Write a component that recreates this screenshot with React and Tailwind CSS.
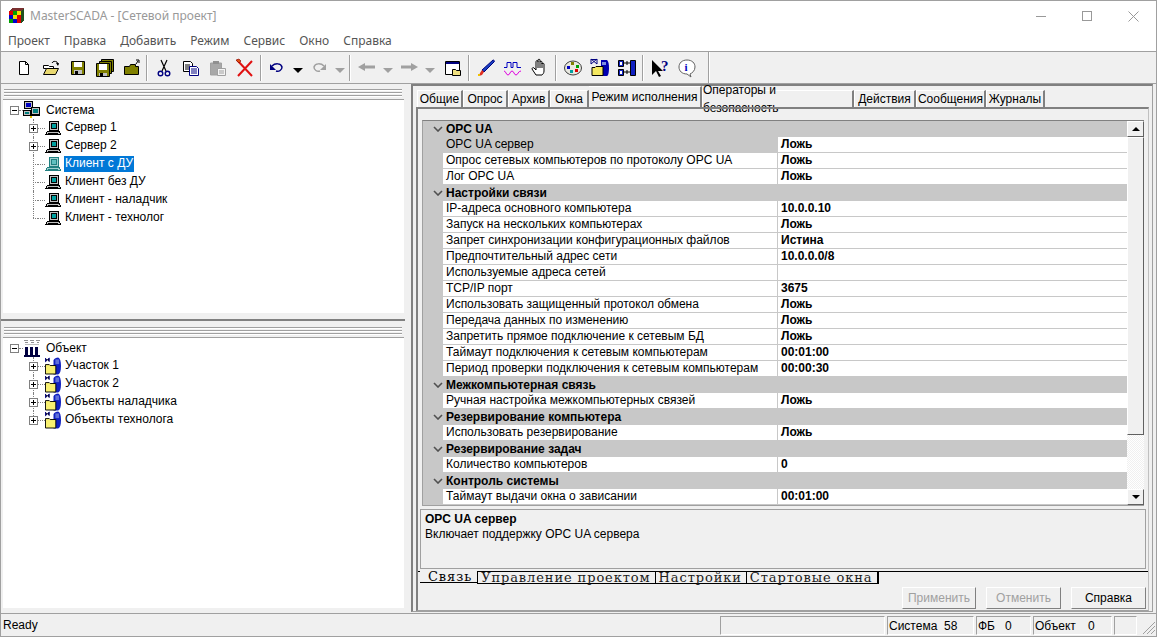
import React from "react";

const menu = ["Проект", "Правка", "Добавить", "Режим", "Сервис", "Окно", "Справка"];

const tabs = [
  ["Общие", "w-[46px]"],
  ["Опрос", "w-[45px]"],
  ["Архив", "w-[42px]"],
  ["Окна", "w-[39px]"],
  ["Режим исполнения", "w-[113px]", true],
  ["Операторы и безопасность", "w-[152px]"],
  ["Действия", "w-[62px]"],
  ["Сообщения", "w-[70px]"],
  ["Журналы", "w-[59px]"],
];

const rows = [
  { group: "OPC UA" },
  { name: "OPC UA сервер", value: "Ложь", selected: true },
  { name: "Опрос сетевых компьютеров по протоколу OPC UA", value: "Ложь" },
  { name: "Лог OPC UA", value: "Ложь" },
  { group: "Настройки связи" },
  { name: "IP-адреса основного компьютера", value: "10.0.0.10" },
  { name: "Запуск на нескольких компьютерах", value: "Ложь" },
  { name: "Запрет синхронизации конфигурационных файлов", value: "Истина" },
  { name: "Предпочтительный адрес сети", value: "10.0.0.0/8" },
  { name: "Используемые адреса сетей", value: "" },
  { name: "TCP/IP порт", value: "3675" },
  { name: "Использовать защищенный протокол обмена", value: "Ложь" },
  { name: "Передача данных по изменению", value: "Ложь" },
  { name: "Запретить прямое подключение к сетевым БД", value: "Ложь" },
  { name: "Таймаут подключения к сетевым компьютерам", value: "00:01:00" },
  { name: "Период проверки подключения к сетевым компьютерам", value: "00:00:30" },
  { group: "Межкомпьютерная связь" },
  { name: "Ручная настройка межкомпьютерных связей", value: "Ложь" },
  { group: "Резервирование компьютера" },
  { name: "Использовать резервирование", value: "Ложь" },
  { group: "Резервирование задач" },
  { name: "Количество компьютеров", value: "0" },
  { group: "Контроль системы" },
  { name: "Таймаут выдачи окна о зависании", value: "00:01:00" },
];

function Svg({ size = 20, children }) {
  return (
    <svg width={size} height={size} viewBox="0 0 20 20" fill="none">
      {children}
    </svg>
  );
}

function Logo() {
  const colors = ["#e00000", "#00a000", "#f0e000", "#0000d0", "#f0e000", "#e00000", "#00a000", "#0000d0", "#e00000"];
  return (
    <svg width="16" height="16" viewBox="0 0 16 16" shapeRendering="crispEdges">
      {colors.map((c, i) => (
        <rect key={i} x={(i % 3) * 4} y={3 + Math.floor(i / 3) * 4} width="4" height="4" fill={c} />
      ))}
      <path d="M0 3l3-3h12v3h-3z" fill="#7a3030" />
      <path d="M12 3l3-3v12l-3 3z" fill="#205020" />
    </svg>
  );
}

const ic = {
  file: (
    <Svg>
      <path d="M5.5 3.5h6l3 3v10h-9z" fill="#fff" stroke="#000" />
      <path d="M11.5 3.5v3h3" stroke="#000" />
    </Svg>
  ),
  open: (
    <Svg>
      <path d="M2.5 7.5h5l1 1h4v2h-10z" fill="#fff" stroke="#000" />
      <path d="M2.5 16.5l3-6h12l-3 6z" fill="#e8d870" stroke="#000" />
      <path d="M11 5c1-2 3-2 5-1l1 3" stroke="#000" />
      <path d="M15 5h3l-1 3z" fill="#000" />
    </Svg>
  ),
  save: (
    <Svg>
      <path d="M3.5 3.5h13v13h-13z" fill="#808000" stroke="#000" />
      <path d="M6 4h8v5H6z" fill="#fff" />
      <path d="M6 12h8v4H6z" fill="#c0c0c0" />
      <path d="M7 13h3v3H7z" fill="#000" />
    </Svg>
  ),
  saveAll: (
    <Svg>
      <path d="M6.5 1.5h12v12h-12z" fill="#808000" stroke="#000" />
      <path d="M4.5 3.5h12v12h-12z" fill="#808000" stroke="#000" />
      <path d="M1.5 5.5h13v13h-13z" fill="#808000" stroke="#000" />
      <path d="M4 6h8v6H4z" fill="#fff" />
      <path d="M4 15h8v3H4z" fill="#c0c0c0" />
      <path d="M5 15h3v3H5z" fill="#000" />
    </Svg>
  ),
  folderUp: (
    <Svg>
      <path d="M2.5 8.5h5l1-2h5v2h3v8h-14z" fill="#808000" stroke="#000" />
      <path d="M14 6l2-3M14 2h3v3" stroke="#000" />
    </Svg>
  ),
  cut: (
    <Svg>
      <path d="M7 2l5 11M13 2l-5 11" stroke="#000" strokeWidth="1.2" />
      <circle cx="6.5" cy="15.5" r="2.3" stroke="#000080" strokeWidth="1.4" />
      <circle cx="13.5" cy="15.5" r="2.3" stroke="#000080" strokeWidth="1.4" />
    </Svg>
  ),
  copy: (
    <Svg>
      <path d="M2.5 3.5h7l2 2v8h-9z" fill="#fff" stroke="#000" />
      <path d="M4 7h5M4 9h5M4 11h5" stroke="#000" />
      <path d="M8.5 8.5h7l2 2v7h-9z" fill="#fff" stroke="#000080" />
      <path d="M10 11h6M10 13h6M10 15h6" stroke="#000080" />
    </Svg>
  ),
  paste: (
    <Svg>
      <path d="M2.5 5h11v12h-11z" fill="#a8a8a8" stroke="#a0a0a0" />
      <path d="M5 3h6v3H5z" fill="#909090" />
      <path d="M9.5 10.5h8v7h-8z" fill="#f4f4f4" stroke="#a0a0a0" />
      <path d="M11 13h5M11 15h5" stroke="#a0a0a0" />
    </Svg>
  ),
  del: (
    <Svg>
      <path d="M2 2l15 16M17 3L3 18" stroke="#e01010" strokeWidth="2" />
      <path d="M1 2l3-1 2 2-2 2z" fill="#e05010" stroke="#800000" strokeWidth=".6" />
    </Svg>
  ),
  undo: (
    <Svg>
      <path d="M5 8c3-3 9-3 10 1 0 3-3 5-6 4" stroke="#000080" strokeWidth="1.5" />
      <path d="M3 6v6h6z" fill="#000080" />
    </Svg>
  ),
  redo: (
    <Svg>
      <path d="M15 8c-3-3-9-3-10 1 0 3 3 5 6 4" stroke="#a0a0a0" strokeWidth="1.5" />
      <path d="M17 6v6h-6z" fill="#a0a0a0" />
    </Svg>
  ),
  back: (
    <Svg>
      <path d="M1 9l7-4v2.5h10v3H8V13z" fill="#a0a0a0" />
    </Svg>
  ),
  forward: (
    <Svg>
      <path d="M19 9l-7-4v2.5H2v3h10V13z" fill="#a0a0a0" />
    </Svg>
  ),
  window: (
    <Svg>
      <path d="M2.5 3.5h14v13h-14z" fill="#fff" stroke="#000" />
      <path d="M3 4h13v2H3z" fill="#000080" />
      <path d="M9.5 11.5h3l1 1h4v5h-8z" fill="#f0e080" stroke="#000" />
    </Svg>
  ),
  brush: (
    <Svg>
      <path d="M17 2c1 0 2 1 1 2L8 14l-2-2z" fill="#1840c0" stroke="#000080" />
      <path d="M6 12l2 2-2 3-3 1 1-3z" fill="#e03020" />
      <path d="M2 16h2v2H2z" fill="#f0c000" />
    </Svg>
  ),
  wave: (
    <Svg>
      <path d="M1 9.5h3v-5h4v5h2v-5h4v5h4" stroke="#0000c0" />
      <path d="M1 13c2 0 2 4 4 4s2-4 4-4 2 4 4 4 2-4 5-4" stroke="#e000e0" />
    </Svg>
  ),
  hand: (
    <Svg>
      <path d="M6 17l-4-6c0-1 1-2 2-1l2 2V4c0-2 2-2 2 0V2c0-1 2-1 2 0v2c0-1 2-1 2 0v2c0-1 2-1 2 0v7c0 2-1 3-2 4z" fill="#fff" stroke="#000" />
      <path d="M8 4v6M10 4v6M12 5v5" stroke="#000" />
    </Svg>
  ),
  palette: (
    <Svg>
      <ellipse cx="10" cy="10" rx="8.5" ry="7" fill="#e8e8e0" stroke="#404040" />
      <path d="M8 4h3v3H8z" fill="#808000" />
      <path d="M4 8h3v3H4z" fill="#0000c0" />
      <path d="M13 7h3v3h-3z" fill="#00a000" />
      <path d="M12 11h3v3h-3z" fill="#e00000" />
      <path d="M7 12h3v3H7z" fill="#00a0a0" />
    </Svg>
  ),
  module: (
    <Svg>
      <path d="M11 2h6c1 1 2 3 2 8s-1 8-2 8h-6z" fill="#0000b0" />
      <path d="M2 9.5h3l1-1h7v9H2z" fill="#f4e860" stroke="#000" />
      <path d="M1 1.5h6M1 1v5l6-5v5z" stroke="#000080" />
      <path d="M12 4h4v3h-4z" fill="#8090e0" />
    </Svg>
  ),
  link: (
    <Svg>
      <path d="M1.5 2.5h5v6h-5zM1.5 11.5h5v6h-5z" fill="#1020c0" stroke="#000" />
      <path d="M3 4h2v3H3zM3 13h2v3H3z" fill="#fff" />
      <path d="M13.5 2.5h5v15h-5z" fill="#1020c0" stroke="#000" />
      <path d="M7 5h6M7 14h6M10 3v4M10 12v4" stroke="#000" />
    </Svg>
  ),
  help: (
    <Svg>
      <path d="M2 2v15l4-4 3 6 2-1-3-5h5z" fill="#000" />
      <text x="11" y="13" fontSize="15" fontWeight="700" fontFamily="Liberation Serif" fill="#000080">?</text>
    </Svg>
  ),
  info: (
    <Svg>
      <path d="M10 2c5 0 8 3 8 7s-3 6-5 7l1 3-4-3c-5 0-8-3-8-7s3-7 8-7z" fill="#fff" stroke="#606060" />
      <text x="7.5" y="13" fontSize="11" fontWeight="700" fontFamily="Liberation Serif" fill="#0000c0">i</text>
    </Svg>
  ),
};

function Drop({ dark }) {
  return (
    <span className={`w-0 h-0 border-x-[5px] border-x-transparent border-t-[5px] mt-[5px] ${dark ? "border-t-black" : "border-t-[#a0a0a0]"}`} />
  );
}

function Sep({ className = "" }) {
  return <div className={`w-[2px] h-[26px] bg-[#a0a0a0] border-r border-white ${className}`} />;
}

function Btn({ icon, w = "w-[27px]" }) {
  return <div className={`${w} flex items-center justify-center shrink-0`}>{icon}</div>;
}

function Toolbar() {
  return (
    <div className="h-[32px] flex items-center pl-[9px] bg-[#f0f0f0] border-t border-[#a0a0a0] border-b-0 shrink-0">
      <Btn icon={ic.file} />
      <Btn icon={ic.open} />
      <Btn icon={ic.save} />
      <Btn icon={ic.saveAll} />
      <Btn icon={ic.folderUp} />
      <Sep className="ml-px mr-[2px]" />
      <Btn icon={ic.cut} />
      <Btn icon={ic.copy} />
      <Btn icon={ic.paste} />
      <Btn icon={ic.del} />
      <Sep className="ml-[2px] mr-[3px]" />
      <Btn icon={ic.undo} w="w-[24px]" />
      <Btn icon={<Drop dark />} w="w-[18px]" />
      <Btn icon={ic.redo} w="w-[24px]" />
      <Btn icon={<Drop />} w="w-[18px]" />
      <Sep className="ml-0 mr-[4px]" />
      <Btn icon={ic.back} w="w-[24px]" />
      <Btn icon={<Drop />} w="w-[18px]" />
      <Btn icon={ic.forward} w="w-[24px]" />
      <Btn icon={<Drop />} w="w-[18px]" />
      <Btn icon={ic.window} />
      <Sep className="mx-[2px]" />
      <Btn icon={ic.brush} />
      <Btn icon={ic.wave} />
      <Btn icon={ic.hand} />
      <Sep className="mx-[2px]" />
      <Btn icon={ic.palette} />
      <Btn icon={ic.module} />
      <Btn icon={ic.link} />
      <Sep className="mx-[2px]" />
      <Btn icon={ic.help} />
      <Btn icon={ic.info} />
      <div className="w-[2px] h-[32px] bg-[#a0a0a0] border-r border-white ml-[8px]" />
    </div>
  );
}

function Gripper() {
  return (
    <div className="h-[12px] shrink-0 flex flex-col justify-center gap-px px-[3px] bg-[#f0f0f0]">
      <div className="h-[2px] bg-white border-t border-[#a0a0a0]" />
      <div className="h-[2px] bg-white border-t border-[#a0a0a0]" />
      <div className="h-[2px] bg-white border-t border-[#a0a0a0]" />
    </div>
  );
}

function PcIcon({ faded }) {
  const line = faded ? "#208080" : "#000";
  return (
    <svg width="16" height="16" viewBox="0 0 16 16" shapeRendering="crispEdges">
      <path d="M4.5 1.5h9v9h-9z" fill={faded ? "#a0d0d0" : "#c0c0c0"} stroke={line} />
      <path d="M6 3h6v6H6z" fill={faded ? "#208080" : "#000"} />
      <path d="M7 4h4v4H7z" fill={faded ? "#60c0c0" : "#00a0a0"} />
      <path d="M2.5 11.5h12l1 3H.5z" fill={faded ? "#a0d0d0" : "#c0c0c0"} stroke={line} />
      <path d="M3 13h10" stroke={line} />
    </svg>
  );
}

function NetIcon() {
  return (
    <svg width="18" height="18" viewBox="0 0 18 18" shapeRendering="crispEdges">
      <path d="M1.5 .5h8v7h-8z" fill="#c0c0c0" stroke="#000" />
      <path d="M3 2h5v4H3z" fill="#0000c0" />
      <path d="M8.5 6.5h8v7h-8z" fill="#c0c0c0" stroke="#000" />
      <path d="M10 8h5v4h-5z" fill="#008080" />
      <path d="M.5 9.5h7v5h-7z" fill="#c0c0c0" stroke="#000" />
      <path d="M2 11h4v2H2z" fill="#008080" />
      <path d="M8 14.5h9" stroke="#000" />
      <path d="M7 15h2v2H7z" fill="#e0c000" />
    </svg>
  );
}

function ObjIcon() {
  return (
    <svg width="18" height="18" viewBox="0 0 18 18" shapeRendering="crispEdges">
      <path d="M1 1h4v1H1zM7 1h4v1H7zM13 1h4v1h-4zM2 3h3v1H2zM8 3h3v1H8zM14 3h2v1h-2z" fill="#909090" />
      <path d="M2 5h14v1H2z" fill="#c0c0c0" />
      <path d="M2 8h3v10H2zM7 8h3v10H7zM12 8h3v10h-3zM1 16h16v2H1z" fill="#000040" />
    </svg>
  );
}

function GroupIcon() {
  return (
    <svg width="17" height="18" viewBox="0 0 17 18">
      <path d="M9 3c1-2 3-3 5-3 2 1 3 4 3 9s-1 8-3 9H9z" fill="#1020c0" />
      <path d="M11 2h4v5h-4z" fill="#6070d8" />
      <path d="M.5 7.5h4l1 1h6v9H.5z" fill="#f8f070" stroke="#000" />
      <path d="M.5 .5v4l4-4v4" stroke="#000080" />
    </svg>
  );
}

function Expander({ open }) {
  return (
    <span className="relative w-[9px] h-[9px] border border-[#808080] bg-white shrink-0 block">
      <span className="absolute left-[1px] top-[3px] w-[5px] h-px bg-black" />
      {!open && <span className="absolute left-[3px] top-[1px] w-px h-[5px] bg-black" />}
    </span>
  );
}

function TreeRoot({ icon, label }) {
  return (
    <div className="relative flex items-center h-[18px] pl-[7px]">
      <Expander open />
      <span className="w-[4px] border-t border-dotted border-[#808080]" />
      <span className="w-[18px] flex justify-center">{icon}</span>
      <span className="ml-[5px]">{label}</span>
    </div>
  );
}

function TreeChild({ icon, label, expandable, selected, last }) {
  return (
    <div className="relative flex items-center h-[18px] pl-[26px]">
      {/* линия дерева */}
      <span className={`absolute left-[30px] top-0 border-l border-dotted border-[#808080] ${last ? "h-[9px]" : "h-[18px]"}`} />
      {expandable ? (
        <span className="relative"><Expander /></span>
      ) : (
        <span className="w-[9px] h-[9px] relative block shrink-0">
          <span className="absolute left-[4px] right-0 top-[4px] border-t border-dotted border-[#808080]" />
        </span>
      )}
      <span className="w-[7px] border-t border-dotted border-[#808080]" />
      <span className="w-[16px] flex justify-center shrink-0">{icon}</span>
      <span className={`ml-[3px] px-[1px] h-[16px] leading-[15px] ${selected ? "bg-[#0078d7] text-white" : ""}`}>{label}</span>
    </div>
  );
}

function LeftPane() {
  return (
    <div className="w-[404px] shrink-0 flex flex-col pt-[3px] bg-[#f0f0f0]">
      <Gripper />
      <div className="h-[214px] shrink-0 ml-[2px] mr-px bg-white border-t border-[#a0a0a0] pt-px">
        <TreeRoot icon={<NetIcon />} label="Система" />
        <TreeChild icon={<PcIcon />} label="Сервер 1" expandable />
        <TreeChild icon={<PcIcon />} label="Сервер 2" expandable />
        <TreeChild icon={<PcIcon faded />} label="Клиент с ДУ" selected />
        <TreeChild icon={<PcIcon />} label="Клиент без ДУ" />
        <TreeChild icon={<PcIcon />} label="Клиент - наладчик" />
        <TreeChild icon={<PcIcon />} label="Клиент - технолог" last />
      </div>
      <div className="h-[7px] shrink-0 border-b-2 border-[#808080] mt-px" />
      <div className="mt-[4px]"><Gripper /></div>
      <div className="flex-1 ml-[2px] mr-px mb-[5px] bg-white border-t border-[#a0a0a0] pt-px">
        <TreeRoot icon={<ObjIcon />} label="Объект" />
        <TreeChild icon={<GroupIcon />} label="Участок 1" expandable />
        <TreeChild icon={<GroupIcon />} label="Участок 2" expandable />
        <TreeChild icon={<GroupIcon />} label="Объекты наладчика" expandable />
        <TreeChild icon={<GroupIcon />} label="Объекты технолога" expandable last />
      </div>
    </div>
  );
}

function Row({ row }) {
  if (row.group) {
    return (
      <div className="h-[16px] flex items-center bg-[#c8c8c8] font-bold">
        <span className="w-[23px] flex justify-center pl-[6px]">
          <svg width="10" height="6" viewBox="0 0 10 6"><path d="M1 1l4 4 4-4" stroke="#505050" strokeWidth="1.6" fill="none" /></svg>
        </span>
        <span className="pl-[0px]">{row.group}</span>
      </div>
    );
  }
  return (
    <div className="h-[16px] flex bg-[#c8c8c8]">
      <span className="w-[20px] shrink-0" />
      <span className={`w-[334px] shrink-0 pl-[3px] leading-[14px] border-b ${row.selected ? "border-[#c8c8c8]" : "bg-white border-[#c8c8c8]"}`}>{row.name}</span>
      <span className="w-px bg-[#c8c8c8] shrink-0" />
      <span className="flex-1 bg-white pl-[3px] font-bold leading-[15px] border-b border-[#c8c8c8]">{row.value}</span>
    </div>
  );
}

function ScrollArrow({ up }) {
  return (
    <div className="h-[16px] shrink-0 flex items-center justify-center bg-[#f0f0f0] border border-white border-r-[#606060] border-b-[#606060]">
      <span className={`w-0 h-0 border-x-[4px] border-x-transparent ${up ? "border-b-[4px] border-b-black" : "border-t-[4px] border-t-black"}`} />
    </div>
  );
}

function Grid() {
  return (
    <div className="h-[386px] mx-[4px] flex border-t border-[#808080] border-b border-b-[#a0a0a0] border-l border-l-[#a0a0a0] shrink-0">
      <div className="flex-1">
        {rows.map((r, i) => <Row key={i} row={r} />)}
      </div>
      <div className="w-[17px] shrink-0 flex flex-col">
        <ScrollArrow up />
        <div className="h-[298px] shrink-0 bg-[#f0f0f0] border border-white border-r-[#606060] border-b-[#606060]" />
        <div className="flex-1 bg-[repeating-conic-gradient(#ffffff_0_25%,#f0f0f0_0_50%)] bg-[length:2px_2px]" />
        <ScrollArrow />
      </div>
    </div>
  );
}

function MiniTabs() {
  const items = ["Управление проектом", "Настройки", "Стартовые окна"];
  return (
    <div className="h-[18px] mt-[2px] shrink-0 border-t border-black flex pl-[2px] font-['DejaVu_Serif',serif] text-[13px] leading-[12px] tracking-[0.9px] text-[#202020]">
      <span className="h-[12px] pl-[8px] pr-[5px] -mt-px border-b border-black bg-[#f0f0f0] text-black border-l-0">Связь</span>
      {items.map((t, i) => (
        <span key={t} className="h-[12px] pl-[3px] pr-[4px] border-b border-black border-l border-l-black -skew-x-[0deg] whitespace-pre">{t}</span>
      ))}
      <span className="h-[12px] w-[2px] border-l-2 border-black" />
    </div>
  );
}

function DlgButton({ label, disabled, w }) {
  return (
    <div className={`${w} h-[22px] flex items-center justify-center border border-white border-r-[#808080] border-b-[#808080] ${disabled ? "text-[#a0a0a0]" : "text-black"}`}>
      {label}
    </div>
  );
}

function RightPane() {
  return (
    <div className="flex-1 min-w-0 flex flex-col pl-[6px] pr-[3px] pb-[1px]">
      <div className="flex-1 flex flex-col border-t-2 border-l-2 border-[#808080] border-r border-r-[#a0a0a0] border-b border-b-[#a0a0a0] pl-[3px] pr-[3px]">
        <div className="h-[21px] shrink-0 flex items-end pl-px">
          {tabs.map(([t, w, active]) => (
            <div
              key={t}
              className={`${w} shrink-0 flex justify-center ${active ? "h-[22px] bg-[#f0f0f0] border-t border-white border-r-2 border-r-[#808080] items-start pt-[1px] -mb-px" : "h-[17px] border-t border-l border-white border-r-2 border-r-[#808080] items-center"}`}
            >
              {t}
            </div>
          ))}
        </div>
        <div className="flex-1 flex flex-col border-t-2 border-l-2 border-[#808080] border-b border-b-[#a0a0a0] border-r border-r-[#c0c0c0]">
          <div className="h-[11px] shrink-0" />
          <Grid />
          <div className="h-[60px] mt-[3px] mx-[2px] shrink-0 border border-[#a0a0a0] pl-[4px] pt-[2px] leading-[15px]">
            <div className="font-bold">OPC UA сервер</div>
            <div>Включает поддержку OPC UA сервера</div>
          </div>
          <MiniTabs />
          <div className="flex justify-end gap-[10px] pr-[2px] -mt-[2px]">
            <DlgButton label="Применить" disabled w="w-[74px]" />
            <DlgButton label="Отменить" disabled w="w-[75px]" />
            <DlgButton label="Справка" w="w-[75px]" />
          </div>
        </div>
      </div>
    </div>
  );
}

function StatusCell({ w, children }) {
  return (
    <div className={`${w} h-[19px] flex items-center border border-[#a0a0a0] border-r-white border-b-white pl-px shrink-0`}>
      {children}
    </div>
  );
}

function StatusBar() {
  return (
    <div className="h-[23px] shrink-0 flex items-end border-t border-[#a0a0a0] bg-[#f0f0f0] pb-px">
      <div className="flex-1 pl-[2px] h-[19px]">Ready</div>
      <div className="flex gap-[2px]">
        <StatusCell w="w-[165px]" />
        <StatusCell w="w-[87px]"><span className="w-[55px]">Система</span><span>58</span></StatusCell>
        <StatusCell w="w-[55px]"><span className="w-[27px]">ФБ</span><span>0</span></StatusCell>
        <StatusCell w="w-[79px]"><span className="w-[53px]">Объект</span><span>0</span></StatusCell>
        <StatusCell w="w-[23px]" />
      </div>
      <div className="w-[19px] h-[19px] relative overflow-hidden">
        <svg width="19" height="19" viewBox="0 0 19 19">
          <path d="M18 6L6 18M18 10L10 18M18 14l-4 4" stroke="#a0a0a0" />
        </svg>
      </div>
    </div>
  );
}

export default function App() {
  return (
    <div className="w-[1157px] h-[637px] flex flex-col bg-[#f0f0f0] border border-[#a0a0a0] overflow-hidden font-['Liberation_Sans',sans-serif] text-[12px] text-black">
      <div className="h-[30px] shrink-0 bg-white flex items-center pl-[8px] font-['Noto_Sans',sans-serif]">
        <Logo />
        <span className="ml-[5px] text-[#999999]">MasterSCADA - [Сетевой проект]</span>
        <div className="ml-auto flex items-center text-[#a0a0a0]">
          <span className="w-[46px] flex justify-center"><span className="w-[10px] h-px bg-[#999999]" /></span>
          <span className="w-[46px] flex justify-center"><span className="w-[10px] h-[10px] border border-[#999999]" /></span>
          <span className="w-[46px] flex justify-center">
            <svg width="11" height="11" viewBox="0 0 11 11"><path d="M.5.5l10 10M10.5.5l-10 10" stroke="#999999" /></svg>
          </span>
        </div>
      </div>
      <div className="h-[20px] shrink-0 bg-white flex items-center pl-[7px] gap-[14px] font-['Noto_Sans',sans-serif] text-[#555555]">
        {menu.map((m) => <span key={m}>{m}</span>)}
      </div>
      <Toolbar />
      <div className="flex-1 min-h-0 flex border-t border-[#a0a0a0]">
        <LeftPane />
        <RightPane />
      </div>
      <StatusBar />
    </div>
  );
}
